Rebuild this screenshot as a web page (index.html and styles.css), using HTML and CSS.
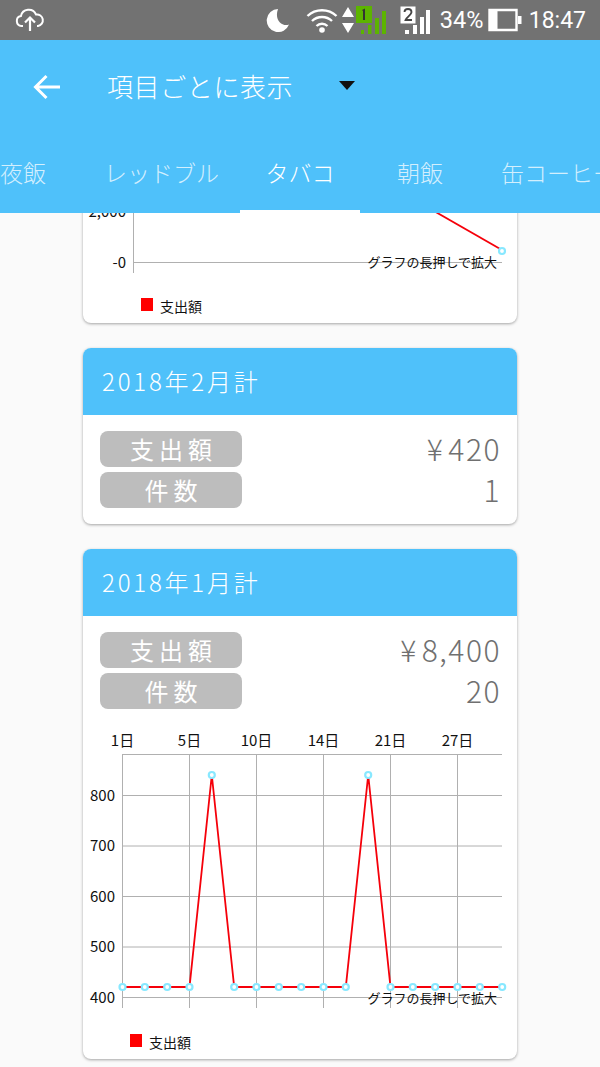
FILE: index.html
```html
<!DOCTYPE html>
<html lang="ja">
<head>
<meta charset="utf-8">
<title>項目ごとに表示</title>
<link rel="stylesheet" href="styles.css">
</head>
<body>
<div class="screen">
  <header class="header">
    <div class="status">
      <svg class="ic-cloud" viewBox="0 0 30 24" width="30" height="24"><path d="M8 18H6.500a5 5 0 0 1-.6-9.900A8 8 0 0 1 21 6.500a5.800 5.800 0 0 1 2 11.500h-1" fill="none" stroke="#fff" stroke-width="2"/><path d="M15 23V10M10 14.500l5-5 5 5" fill="none" stroke="#fff" stroke-width="2.200"/></svg>
      <div class="status-right">
        <svg class="ic-moon" viewBox="0 0 24 24" width="24" height="24"><path d="M12 1a11.500 11.500 0 1 0 11 15.500C16 19 8 12 12 1z" fill="#fff"/></svg>
        <svg class="ic-wifi" viewBox="0 0 32 26" width="32" height="26"><path d="M1.500 9a21 21 0 0 1 29 0M6 14a14.500 14.500 0 0 1 20 0M10.500 19a8 8 0 0 1 11 0" fill="none" stroke="#fff" stroke-width="2.400"/><circle cx="16" cy="23" r="2.800" fill="#fff"/></svg>
        <svg class="ic-arrows" viewBox="0 0 12 28" width="12" height="28"><path d="M6 1l6 10H0zM0 17h12L6 27z" fill="#fff"/></svg>
        <svg class="ic-sim" viewBox="0 0 31 28" width="31" height="28"><rect x="0" y="0" width="16" height="17" fill="#5cb400"/><path d="M6 4l3-1.500V14H7V5z" fill="#333"/><rect x="5" y="24" width="3" height="4" fill="#5cb400"/><rect x="12" y="19" width="3.500" height="9" fill="#5cb400"/><rect x="19" y="12" width="4" height="16" fill="#5cb400"/><rect x="26" y="5" width="4" height="23" fill="#5cb400"/></svg>
        <svg class="ic-sim2" viewBox="0 0 30 28" width="30" height="28"><rect x="0.500" y="0.500" width="15" height="17" fill="#fff"/><path d="M4.500 6c0-4 7-4 7 0 0 3-5 5-6 8h6.500" fill="none" stroke="#444" stroke-width="1.800"/><rect x="5" y="24" width="4" height="4" fill="#fff"/><rect x="13" y="19" width="4" height="9" fill="#fff"/><rect x="20" y="11" width="4" height="17" fill="#fff"/><rect x="26" y="4" width="4" height="24" fill="#fff"/></svg>
        <span class="pct">34%</span>
        <svg class="ic-batt" viewBox="0 0 34 24" width="34" height="24"><path d="M1.500 2h27v20h-27z" fill="none" stroke="#fff" stroke-width="2.400"/><rect x="1.500" y="2" width="8" height="20" fill="#fff"/><rect x="30" y="8" width="3.500" height="8" fill="#fff"/></svg>
        <span class="time">18:47</span>
      </div>
    </div>
    <div class="toolbar">
      <svg class="ic-back" viewBox="0 0 28 26" width="28" height="26"><path d="M27 13H3M13.500 2L2.500 13l11 11" fill="none" stroke="#fff" stroke-width="3"/></svg>
      <span class="title">項目ごとに表示</span>
      <svg class="ic-drop" viewBox="0 0 16 9" width="16" height="9"><path d="M0 0h16L8 9z" fill="#111"/></svg>
    </div>
    <nav class="tabs">
      <span class="tab">夜飯</span>
      <span class="tab">レッドブル</span>
      <span class="tab active">タバコ</span>
      <span class="tab">朝飯</span>
      <span class="tab">缶コーヒー</span>
    </nav>
  </header>
  <main class="main">
    <section class="card card-partial">
      <svg class="chart" viewBox="83 203 434 120" width="434" height="120">
        <text class="ylab" x="126" y="217">2,000</text>
        <line class="grid" x1="133.500" y1="203" x2="133.500" y2="273"/>
        <line class="grid" x1="133" y1="262.500" x2="502" y2="262.500"/>
        <text class="ylab" x="126" y="268">-0</text>
        <line class="series" x1="420" y1="203" x2="502" y2="250"/>
        <circle class="dot" cx="502" cy="251" r="3"/>
        <text class="hint" x="497" y="267">グラフの長押しで拡大</text>
        <rect class="legend" x="141" y="298" width="12" height="13"/>
        <text class="legtext" x="160" y="312">支出額</text>
      </svg>
    </section>
    <section class="card">
      <h2 class="card-head">2018年2月計</h2>
      <div class="rows">
        <div class="row"><span class="pill">支出額</span><span class="val"><span class="yen">¥</span>420</span></div>
        <div class="row"><span class="pill">件数</span><span class="val">1</span></div>
      </div>
    </section>
    <section class="card">
      <h2 class="card-head">2018年1月計</h2>
      <div class="rows">
        <div class="row"><span class="pill">支出額</span><span class="val"><span class="yen">¥</span>8,400</span></div>
        <div class="row"><span class="pill">件数</span><span class="val">20</span></div>
      </div>
      <svg class="chart" viewBox="83 725 434 334" width="434" height="334">
        <g class="grid">
          <line x1="122.500" y1="754" x2="122.500" y2="1008"/><line x1="189.500" y1="754" x2="189.500" y2="1008"/><line x1="256.500" y1="754" x2="256.500" y2="1008"/><line x1="323.500" y1="754" x2="323.500" y2="1008"/><line x1="390.500" y1="754" x2="390.500" y2="1008"/><line x1="457.500" y1="754" x2="457.500" y2="1008"/>
          <line x1="122" y1="754.500" x2="502" y2="754.500"/><line x1="122" y1="795.500" x2="502" y2="795.500"/><line x1="122" y1="846" x2="502" y2="846"/><line x1="122" y1="896.500" x2="502" y2="896.500"/><line x1="122" y1="947" x2="502" y2="947"/><line x1="122" y1="997.500" x2="502" y2="997.500"/>
        </g>
        <g class="xlabs">
          <text x="122.500" y="746">1日</text><text x="189.500" y="746">5日</text><text x="256.500" y="746">10日</text><text x="323.500" y="746">14日</text><text x="390.500" y="746">21日</text><text x="457.500" y="746">27日</text>
        </g>
        <g class="ylabs">
          <text x="115" y="801">800</text><text x="115" y="851">700</text><text x="115" y="902">600</text><text x="115" y="952">500</text><text x="115" y="1003">400</text>
        </g>
        <polyline class="series" points="122.500,987 144.800,987 167.200,987 189.500,987 211.800,775 234.200,987 256.500,987 278.800,987 301.200,987 323.500,987 345.800,987 368.200,775 390.500,987 412.800,987 435.200,987 457.500,987 479.800,987 502.200,987"/>
        <g class="dots">
          <circle cx="122.500" cy="987" r="3"/><circle cx="144.800" cy="987" r="3"/><circle cx="167.200" cy="987" r="3"/><circle cx="189.500" cy="987" r="3"/><circle cx="211.800" cy="775" r="3"/><circle cx="234.200" cy="987" r="3"/><circle cx="256.500" cy="987" r="3"/><circle cx="278.800" cy="987" r="3"/><circle cx="301.200" cy="987" r="3"/><circle cx="323.500" cy="987" r="3"/><circle cx="345.800" cy="987" r="3"/><circle cx="368.200" cy="775" r="3"/><circle cx="390.500" cy="987" r="3"/><circle cx="412.800" cy="987" r="3"/><circle cx="435.200" cy="987" r="3"/><circle cx="457.500" cy="987" r="3"/><circle cx="479.800" cy="987" r="3"/><circle cx="502.200" cy="987" r="3"/>
        </g>
        <text class="hint" x="497" y="1003">グラフの長押しで拡大</text>
        <rect class="legend" x="130" y="1034" width="12" height="13"/>
        <text class="legtext" x="149" y="1048">支出額</text>
      </svg>
    </section>
  </main>
</div>
</body>
</html>
```
FILE: styles.css
```css
* { box-sizing: border-box; }
html, body { margin: 0; padding: 0; }
body {
  width: 600px;
  height: 1067px;
  overflow: hidden;
  background: #fafafa;
  font-family: "Noto Sans CJK JP", "Noto Sans", sans-serif;
  font-weight: 300;
}
.screen { display: flex; flex-direction: column; height: 1067px; overflow: hidden; }
.header { flex: none; background: #4fc1fa; color: #fff; position: relative; z-index: 1; overflow: hidden; }

.status {
  height: 40px;
  background: #727272;
  display: flex;
  align-items: center;
  justify-content: space-between;
  padding: 0 14px 0 15px;
  font-family: Roboto, sans-serif;
  font-weight: 400;
  color: #fff;
}
.status svg { display: block; flex: none; }
.status-right { display: flex; align-items: center; }
.ic-moon { margin-right: 16px; }
.ic-wifi { margin-right: 4px; }
.ic-arrows { margin-right: 2px; }
.ic-sim { margin-right: 13px; }
.ic-sim2 { margin-right: 10px; }
.pct { font-size: 23.500px; margin-right: 5px; width: 43px; white-space: nowrap; }
.ic-batt { margin-right: 7px; }
.time { font-size: 23px; }

.toolbar { height: 93px; display: flex; align-items: center; padding: 0 0 0 33px; }
.ic-back { flex: none; margin-right: 46px; }
.title { font-size: 26px; letter-spacing: 0.6px; margin-right: 46px; white-space: nowrap; padding-bottom: 2px; }
.ic-drop { flex: none; margin-top: -2px; }

.tabs { height: 80px; display: flex; margin-left: -37px; white-space: nowrap; }
.tab {
  flex: none;
  min-width: 120px;
  padding: 1px 21px 0;
  display: flex;
  align-items: center;
  justify-content: center;
  font-size: 23px;
  color: rgba(255, 255, 255, 0.75);
  border-bottom: 3px solid transparent;
}
.tab.active { color: #fff; border-bottom-color: #fff; }

.main {
  flex: 1;
  min-height: 0;
  overflow: hidden;
  display: flex;
  flex-direction: column;
  gap: 25px;
  padding: 0 83px;
}
.card {
  flex: none;
  background: #fff;
  border-radius: 8px;
  box-shadow: 0 1px 3px rgba(0, 0, 0, 0.35);
  overflow: hidden;
}
.card-partial { margin-top: -10px; }
.card-head {
  margin: 0;
  height: 67px;
  padding: 0 19px 2px;
  display: flex;
  align-items: center;
  background: #4fc1fa;
  color: #fff;
  font-size: 24px;
  font-weight: 300;
  letter-spacing: 2.800px;
}
.rows { padding: 16px 17px; display: flex; flex-direction: column; gap: 5px; }
.row { display: flex; align-items: center; justify-content: space-between; height: 36px; }
.pill {
  width: 142px;
  height: 36px;
  background: #bdbdbd;
  border-radius: 8px;
  color: #fff;
  font-size: 24px;
  font-weight: 400;
  letter-spacing: 5px;
  padding: 0 0 1px 5px;
  display: flex;
  align-items: center;
  justify-content: center;
}
.val { font-size: 30px; color: #707070; letter-spacing: 1.500px; margin-right: -1px; padding-bottom: 3px; line-height: 36px; }
.yen { margin-right: 4px; }

.chart { display: block; font-family: "Noto Sans CJK JP", sans-serif; font-weight: 400; }
.grid, .grid line { stroke: #b0b0b0; stroke-width: 1; }
.series { fill: none; stroke: #f5000a; stroke-width: 1.800; }
.dot, .dots circle { fill: #fff; stroke: #88e8ff; stroke-width: 2.200; }
.ylab { font-size: 15px; text-anchor: end; fill: #111; }
.xlabs text { font-size: 15px; text-anchor: middle; fill: #111; }
.ylabs text { font-size: 15px; text-anchor: end; fill: #111; }
.hint { font-size: 13px; text-anchor: end; fill: #111; }
.legend { fill: #ff0000; }
.legtext { font-size: 14px; fill: #111; }
```
